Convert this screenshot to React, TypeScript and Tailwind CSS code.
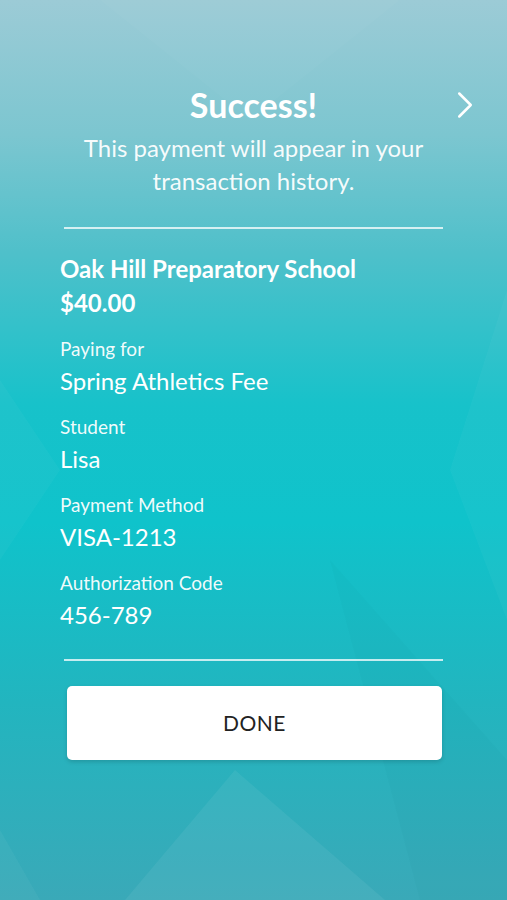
import { ChevronRight } from 'lucide-react';

const details = [
  { label: 'Paying for', value: 'Spring Athletics Fee' },
  { label: 'Student', value: 'Lisa' },
  { label: 'Payment Method', value: 'VISA-1213' },
  { label: 'Authorization Code', value: '456-789' },
];

function Backdrop() {
  // faint diamond facets behind the content
  return (
    <svg className="pointer-events-none absolute inset-0 h-full w-full" viewBox="0 0 507 900" preserveAspectRatio="none">
      <polygon points="0,380 60,470 0,560" fill="#ffffff" opacity="0.03" />
      <polygon points="507,290 450,470 507,620" fill="#ffffff" opacity="0.03" />
      <polygon points="235,770 385,900 125,900" fill="#ffffff" opacity="0.06" />
      <polygon points="0,830 40,900 0,900" fill="#ffffff" opacity="0.04" />
      <polygon points="100,0 250,120 400,0" fill="#ffffff" opacity="0.025" />
      <polygon points="330,560 507,760 507,900 420,900" fill="#0b6b78" opacity="0.035" />
    </svg>
  );
}

export default function App() {
  return (
    <div
      className="relative min-h-[900px] w-full overflow-hidden bg-[linear-gradient(180deg,#9ccbd6_0%,#7cc6d0_15%,#4fc0ca_28%,#17c2ca_45%,#0fc3cb_58%,#22b5bf_78%,#3aa9b8_100%)] text-white"
      style={{ fontFamily: 'Lato, "Open Sans", "Noto Sans", sans-serif' }}
    >
      <Backdrop />
      <div className="relative flex flex-col pt-[87px]">
        <div className="grid h-[36px] grid-cols-[80px_1fr_80px] items-center">
          <div />
          <h1 className="text-center text-[34px] font-bold leading-[36px]">Success!</h1>
          <div className="flex h-[36px] items-center justify-end pr-[19px]">
            <ChevronRight className="h-[46px] w-[46px] shrink-0" strokeWidth={1.3} />
          </div>
        </div>
        <p className="mx-auto mt-[8px] w-[400px] text-center text-[24px] leading-[33px] text-white/95">
          This payment will appear in your transaction history.
        </p>

        <div className="mx-[64px] mt-[30px] h-[2px] bg-white/75" />

        <div className="px-[60px] pt-[23px]">
          <div className="text-[24px] font-bold leading-[34px]">Oak Hill Preparatory School</div>
          <div className="text-[24px] font-bold leading-[34px]">$40.00</div>
          <div className="mt-[16px] flex flex-col gap-[16px]">
            {details.map((d) => (
              <div key={d.label}>
                <div className="text-[19px] leading-[26px] text-white/95">{d.label}</div>
                <div className="mt-[2px] text-[24px] leading-[34px]">{d.value}</div>
              </div>
            ))}
          </div>
        </div>

        <div className="mx-[64px] mt-[27px] h-[2px] bg-white/75" />

        <button className="ml-[67px] mt-[25px] h-[74px] w-[375px] rounded-[5px] bg-white text-[21px] tracking-wide text-[#222] shadow-[0_2px_4px_rgba(0,0,0,0.15)]">
          DONE
        </button>
      </div>
    </div>
  );
}
